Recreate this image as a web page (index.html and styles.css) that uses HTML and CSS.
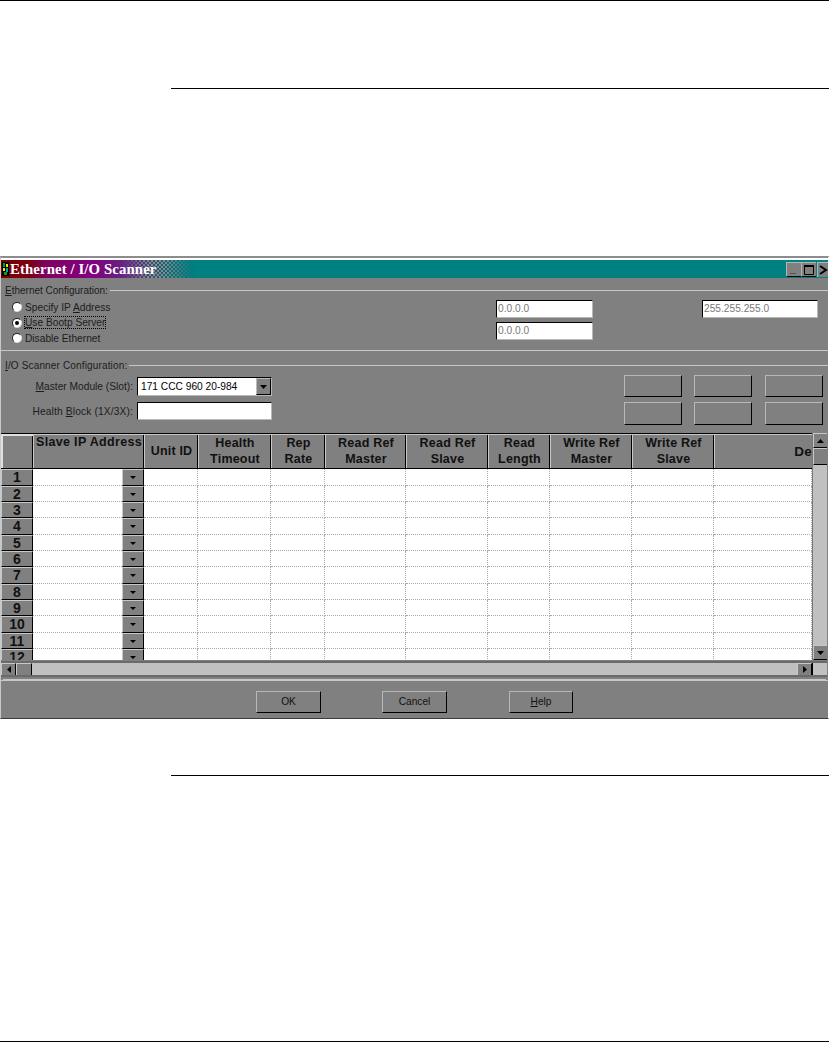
FILE: index.html
```html
<!DOCTYPE html>
<html lang="en">
<head>
<meta charset="utf-8">
<title>Ethernet / I/O Scanner</title>
<link rel="stylesheet" href="styles.css">
</head>
<body>
<div class="page">
  <hr class="edge-rule">
  <hr class="rule rule-top">
  <section class="window">
    <header class="titlebar">
      <svg class="app-icon" width="7" height="14" viewBox="0 0 7 14"><rect width="7" height="14" fill="#000"/><rect x="1" y="1" width="2" height="4" fill="#0a0"/><rect x="4" y="2" width="2" height="3" fill="#ee0"/><rect x="1" y="6" width="2" height="3" fill="#ee0"/><rect x="4" y="6" width="2" height="4" fill="#0aa"/><rect x="2" y="10" width="3" height="3" fill="#0a0"/></svg>
      <h1 class="title">Ethernet / I/O Scanner</h1>
      <div class="win-buttons">
        <span class="win-btn"><svg width="14" height="14" viewBox="0 0 14 14"><rect x="3" y="10" width="6" height="1" fill="#555"/></svg></span>
        <span class="win-btn"><svg width="14" height="14" viewBox="0 0 14 14"><path d="M2.500 3.500h9v8h-9z" fill="none" stroke="#000" stroke-width="1"/><rect x="2" y="2" width="10" height="2" fill="#000"/></svg></span>
        <span class="win-btn win-close"><svg width="10" height="14" viewBox="0 0 10 14"><path d="M2 3l6 4-6 4" fill="none" stroke="#000" stroke-width="2"/></svg></span>
      </div>
    </header>

    <section class="eth">
      <div class="legend"><span><u>E</u>thernet Configuration:</span><i></i></div>
      <div class="eth-body">
        <div class="radios">
          <label class="radio"><b class="dot"></b><span>Specify IP <u>A</u>ddress</span></label>
          <label class="radio"><b class="dot dot-on"></b><span class="focus"><u>U</u>se Bootp Server</span></label>
          <label class="radio"><b class="dot"></b><span>Disable Ethernet</span></label>
        </div>
        <div class="ip-fields">
          <div class="field ip">0.0.0.0</div>
          <div class="field ip">0.0.0.0</div>
        </div>
        <div class="field mask">255.255.255.0</div>
      </div>
    </section>

    <section class="io">
      <div class="legend legend-io"><span><u>I</u>/O Scanner Configuration:</span><i></i></div>
      <div class="io-body">
        <div class="io-form">
          <div class="form-row">
            <span class="form-label"><u>M</u>aster Module (Slot):</span>
            <div class="combo"><span class="combo-text">171 CCC 960 20-984</span><span class="combo-btn"><svg width="7" height="4" viewBox="0 0 7 4"><path d="M0 0h7L3.500 4z" fill="#000"/></svg></span></div>
          </div>
          <div class="form-row form-row-2">
            <span class="form-label form-label-wide">Health <u>B</u>lock (1X/3X):</span>
            <div class="field health"></div>
          </div>
        </div>
        <div class="blank-buttons">
          <span class="btn blank"></span><span class="btn blank"></span><span class="btn blank"></span>
          <span class="btn blank"></span><span class="btn blank"></span><span class="btn blank"></span>
        </div>
      </div>
    </section>

    <section class="sheet">
      <div class="sheet-main">
        <div class="grid-clip">
          <div class="row head">
            <div class="h corner"></div>
            <div class="h slave">Slave IP Address</div>
            <div class="h">Unit ID</div>
            <div class="h">Health<br>Timeout</div>
            <div class="h">Rep<br>Rate</div>
            <div class="h">Read Ref<br>Master</div>
            <div class="h">Read Ref<br>Slave</div>
            <div class="h">Read<br>Length</div>
            <div class="h">Write Ref<br>Master</div>
            <div class="h">Write Ref<br>Slave</div>
            <div class="h desc">De</div>
          </div>
          <div class="row"><div class="num">1</div><div class="ip-cell"></div><div class="drop"><b></b></div><div class="c"></div><div class="c"></div><div class="c"></div><div class="c"></div><div class="c"></div><div class="c"></div><div class="c"></div><div class="c"></div><div class="c"></div></div>
          <div class="row"><div class="num">2</div><div class="ip-cell"></div><div class="drop"><b></b></div><div class="c"></div><div class="c"></div><div class="c"></div><div class="c"></div><div class="c"></div><div class="c"></div><div class="c"></div><div class="c"></div><div class="c"></div></div>
          <div class="row"><div class="num">3</div><div class="ip-cell"></div><div class="drop"><b></b></div><div class="c"></div><div class="c"></div><div class="c"></div><div class="c"></div><div class="c"></div><div class="c"></div><div class="c"></div><div class="c"></div><div class="c"></div></div>
          <div class="row"><div class="num">4</div><div class="ip-cell"></div><div class="drop"><b></b></div><div class="c"></div><div class="c"></div><div class="c"></div><div class="c"></div><div class="c"></div><div class="c"></div><div class="c"></div><div class="c"></div><div class="c"></div></div>
          <div class="row"><div class="num">5</div><div class="ip-cell"></div><div class="drop"><b></b></div><div class="c"></div><div class="c"></div><div class="c"></div><div class="c"></div><div class="c"></div><div class="c"></div><div class="c"></div><div class="c"></div><div class="c"></div></div>
          <div class="row"><div class="num">6</div><div class="ip-cell"></div><div class="drop"><b></b></div><div class="c"></div><div class="c"></div><div class="c"></div><div class="c"></div><div class="c"></div><div class="c"></div><div class="c"></div><div class="c"></div><div class="c"></div></div>
          <div class="row"><div class="num">7</div><div class="ip-cell"></div><div class="drop"><b></b></div><div class="c"></div><div class="c"></div><div class="c"></div><div class="c"></div><div class="c"></div><div class="c"></div><div class="c"></div><div class="c"></div><div class="c"></div></div>
          <div class="row"><div class="num">8</div><div class="ip-cell"></div><div class="drop"><b></b></div><div class="c"></div><div class="c"></div><div class="c"></div><div class="c"></div><div class="c"></div><div class="c"></div><div class="c"></div><div class="c"></div><div class="c"></div></div>
          <div class="row"><div class="num">9</div><div class="ip-cell"></div><div class="drop"><b></b></div><div class="c"></div><div class="c"></div><div class="c"></div><div class="c"></div><div class="c"></div><div class="c"></div><div class="c"></div><div class="c"></div><div class="c"></div></div>
          <div class="row"><div class="num">10</div><div class="ip-cell"></div><div class="drop"><b></b></div><div class="c"></div><div class="c"></div><div class="c"></div><div class="c"></div><div class="c"></div><div class="c"></div><div class="c"></div><div class="c"></div><div class="c"></div></div>
          <div class="row"><div class="num">11</div><div class="ip-cell"></div><div class="drop"><b></b></div><div class="c"></div><div class="c"></div><div class="c"></div><div class="c"></div><div class="c"></div><div class="c"></div><div class="c"></div><div class="c"></div><div class="c"></div></div>
          <div class="row"><div class="num">12</div><div class="ip-cell"></div><div class="drop"><b></b></div><div class="c"></div><div class="c"></div><div class="c"></div><div class="c"></div><div class="c"></div><div class="c"></div><div class="c"></div><div class="c"></div><div class="c"></div></div>
        </div>
        <div class="vscroll">
          <span class="sb-btn"><svg width="7" height="4" viewBox="0 0 7 4"><path d="M3.500 0L7 4H0z" fill="#000"/></svg></span>
          <span class="sb-btn sb-thumb"></span>
          <span class="sb-track"></span>
          <span class="sb-btn"><svg width="7" height="4" viewBox="0 0 7 4"><path d="M0 0h7L3.500 4z" fill="#000"/></svg></span>
        </div>
      </div>
      <div class="hscroll">
        <span class="sb-btn"><svg width="4" height="7" viewBox="0 0 4 7"><path d="M4 0v7L0 3.500z" fill="#000"/></svg></span>
        <span class="sb-btn sb-thumb-h"></span>
        <span class="sb-track"></span>
        <span class="sb-btn"><svg width="4" height="7" viewBox="0 0 4 7"><path d="M0 0v7l4-3.500z" fill="#000"/></svg></span>
        <span class="sb-corner"></span>
      </div>
    </section>

    <footer class="footer">
      <button class="btn action">OK</button>
      <button class="btn action">Cancel</button>
      <button class="btn action action-help"><u>H</u>elp</button>
    </footer>
  </section>
  <hr class="rule rule-bottom">
  <hr class="edge-rule edge-bottom">
</div>
</body>
</html>
```

FILE: styles.css
```css
* { box-sizing: border-box; }
html, body { margin: 0; padding: 0; background: #fff; }
body { font-family: "Liberation Sans", Arial, sans-serif; color: #000; }
.page { width: 829px; height: 1044px; display: flex; flex-direction: column; overflow: hidden; }
hr { margin: 0; border: 0; height: 1px; background: #000; flex: none; }
.edge-rule { width: 100%; }
.rule { margin-left: 171px; width: 658px; }
.rule-top { margin-top: 87px; }
.rule-bottom { margin-top: 56px; }
.edge-bottom { margin-top: 265px; }

.window { flex: none; margin-top: 167px; height: 463px; width: 829px; background: #808080; border-top: 2px solid #8c8c8c; border-left: 1px solid #c8c8c8; border-right: 1px solid #fff; border-bottom: 1px solid #3c3c3c; display: flex; flex-direction: column; font-size: 10.2px; color: #1c1c1c; box-shadow: inset 0 2px 0 #fff; padding-top: 2px; }

.titlebar { position: relative; flex: none; height: 18px; display: flex; align-items: center; background: linear-gradient(90deg, #7a0000 0, #7a0010 28px, #800060 45px, #800080 90px, #5a3080 135px, #0a6a78 165px, #008080 195px); }
.titlebar::before { content: ""; position: absolute; left: 120px; width: 72px; top: 0; bottom: 0; background: repeating-conic-gradient(#8a8a8a 0 25%, transparent 0 50%) 0 0 / 4px 4px; -webkit-mask-image: linear-gradient(90deg, transparent, #000 40%, #000 60%, transparent); mask-image: linear-gradient(90deg, transparent, #000 40%, #000 60%, transparent); }
.app-icon { flex: none; margin-left: 1px; position: relative; }
.title { position: relative; margin: 0 0 0 1px; font: bold 14.8px "Liberation Serif", "Times New Roman", serif; letter-spacing: .1px; color: #fff; white-space: nowrap; }
.win-buttons { margin-left: auto; display: flex; align-self: stretch; padding-top: 2px; padding-bottom: 1px; gap: 0; position: relative; }
.win-btn { width: 15px; background: #808080; border-top: 1px solid #b4b4b4; border-left: 1px solid #b4b4b4; border-bottom: 1px solid #000; display: flex; align-items: center; justify-content: center; overflow: hidden; }
.win-close { width: 11px; margin-left: 1px; justify-content: flex-start; border-bottom: 0; }

.legend { display: flex; align-items: center; height: 12px; padding-left: 4px; gap: 2px; }
.legend span { white-space: nowrap; font-size: 10px; }
.legend-io span { letter-spacing: .15px; }
.legend i { flex: 1; height: 1px; background: #c8c8c8; }

.eth { flex: none; height: 73px; padding-top: 6px; border-bottom: 1px solid #c8c8c8; }
.eth-body { display: flex; padding-top: 4px; }
.radios { width: 495px; display: flex; flex-direction: column; padding-left: 11px; padding-top: 1px; gap: 3.500px; }
.radio { display: flex; align-items: center; height: 12px; gap: 3px; }
.dot { width: 10px; height: 10px; border-radius: 50%; background: #fff; border: 1px solid #222; border-right-color: #ddd; border-bottom-color: #ddd; display: flex; align-items: center; justify-content: center; }
.dot-on::after { content: ""; width: 4px; height: 4px; border-radius: 50%; background: #000; }
.focus { outline: 1px dotted #000; outline-offset: 0; }
.ip-fields { width: 206px; display: flex; flex-direction: column; gap: 4px; }
.field { background: #fff; border-top: 1px solid #000; border-left: 1px solid #000; border-right: 1px solid #b8b8b8; border-bottom: 1px solid #b8b8b8; height: 18px; line-height: 16px; padding-left: 1px; color: #777; font-size: 10.2px; }
.ip { width: 97px; }
.mask { width: 116px; }

.io { flex: none; height: 82px; padding-top: 8px; }
.io-body { display: flex; justify-content: space-between; padding-right: 6px; padding-top: 5px; }
.io-form { display: flex; flex-direction: column; padding-top: 1px; }
.form-row { display: flex; align-items: center; justify-content: flex-end; width: 271px; gap: 4px; }
.form-label-wide { letter-spacing: .15px; }
.form-row-2 { margin-top: 6px; }
.combo { width: 135px; height: 19px; background: #fff; border-top: 1px solid #000; border-left: 1px solid #000; border-right: 1px solid #b8b8b8; border-bottom: 1px solid #b8b8b8; display: flex; justify-content: space-between; align-items: stretch; }
.combo-text { color: #000; padding-left: 3px; line-height: 17px; font-size: 10.2px; }
.combo-btn { width: 15px; background: #808080; border: 1px solid #000; border-top-color: #bbb; border-left-color: #bbb; display: flex; align-items: center; justify-content: center; }
.health { width: 135px; }
.blank-buttons { display: grid; grid-template-columns: 58px 58px 58px; grid-template-rows: 22px 23px; column-gap: 12px; row-gap: 5px; margin-top: -1px; }
.blank:nth-child(3n) { margin-left: 1px; margin-right: -1px; }
.btn { display: block; background: #808080; border-top: 1px solid #b8b8b8; border-left: 1px solid #b8b8b8; border-right: 1px solid #000; border-bottom: 1px solid #000; padding: 0; }

.sheet { flex: none; height: 244px; display: flex; flex-direction: column; padding-right: 1px; }
.sheet-main { flex: 1; display: flex; min-height: 0; }
.grid-clip { width: 811px; height: 227px; overflow: hidden; border-top: 1px solid #000; background: #fff; }
.row { display: grid; grid-template-columns: 32px 89px 22px 54px 73px 54px 81px 82px 62px 82px 82px 1fr; grid-template-rows: minmax(0, 1fr); height: 16px; }
.row:nth-child(3n+2) { height: 17px; }
.row > :nth-child(n) { min-width: 0; min-height: 0; }
.row.head { height: 35px; background: #808080; grid-template-columns: 32px 111px 54px 73px 54px 81px 82px 62px 82px 82px 1fr; border-bottom: 1px solid #000; }
.h { font-weight: bold; font-size: 12.5px; line-height: 15.500px; letter-spacing: .2px; color: #111; text-align: center; display: flex; align-items: center; justify-content: center; border-left: 1px solid #c8c8c8; border-top: 1px solid #c8c8c8; box-shadow: inset -1px 0 0 #000; white-space: nowrap; }
.h.corner { border-left: 2px solid #e0e0e0; border-top: 2px solid #e0e0e0; }
.h.slave { align-items: flex-start; letter-spacing: .33px; }
.h.desc { justify-content: flex-end; font-size: 13.5px; box-shadow: none; overflow: hidden; }
.num { background: #808080; font-weight: bold; font-size: 14px; line-height: 14px; overflow: hidden; text-align: center; border-top: 1px solid #c8c8c8; border-left: 1px solid #c8c8c8; border-bottom: 1px solid #000; border-right: 1px solid #000; color: #111; }
.ip-cell { background: #fff; border-bottom: 1px dotted #aaa; }
.drop { background: #808080; border-top: 1px solid #c8c8c8; border-left: 1px solid #c8c8c8; border-right: 1px solid #000; border-bottom: 1px solid #000; display: flex; align-items: center; justify-content: center; }
.drop b { width: 0; height: 0; border-left: 3px solid transparent; border-right: 3px solid transparent; border-top: 3px solid #000; }
.c { background: #fff; border-right: 1px dotted #aaa; border-bottom: 1px dotted #aaa; }

.vscroll { width: 15px; height: 227px; display: flex; flex-direction: column; background: #c0c0c0; border-left: 1px solid #777; }
.sb-btn { flex: none; display: flex; align-items: center; justify-content: center; background: #808080; border-top: 1px solid #c8c8c8; border-left: 1px solid #c8c8c8; border-bottom: 1px solid #000; }
.vscroll .sb-btn { height: 15px; }
.vscroll .sb-thumb { height: 17px; }
.sb-track { flex: 1; background: #c0c0c0; }
.hscroll { flex: none; height: 16px; display: flex; border-top: 2px solid #6a6a6a; border-bottom: 2px solid #6a6a6a; background: #c0c0c0; }
.hscroll .sb-btn { width: 15px; border-bottom: 0; border-right: 1px solid #000; }
.hscroll .sb-thumb-h { width: 16px; }
.sb-corner { flex: none; width: 15px; background: #c0c0c0; border-left: 1px solid #000; }

.footer { flex: 1; border-top: 1px solid #c8c8c8; margin-top: 3px; box-shadow: 0 -3px 0 -2px #c8c8c8; padding-top: 10px; padding-left: 255px; display: flex; align-items: flex-start; gap: 61px; }
.action { width: 65px; height: 22px; padding-bottom: 2px; font: 10.2px "Liberation Sans", Arial, sans-serif; color: #111; }
.action-help { width: 64px; margin-left: 1px; }
u { text-decoration: underline; }
```
